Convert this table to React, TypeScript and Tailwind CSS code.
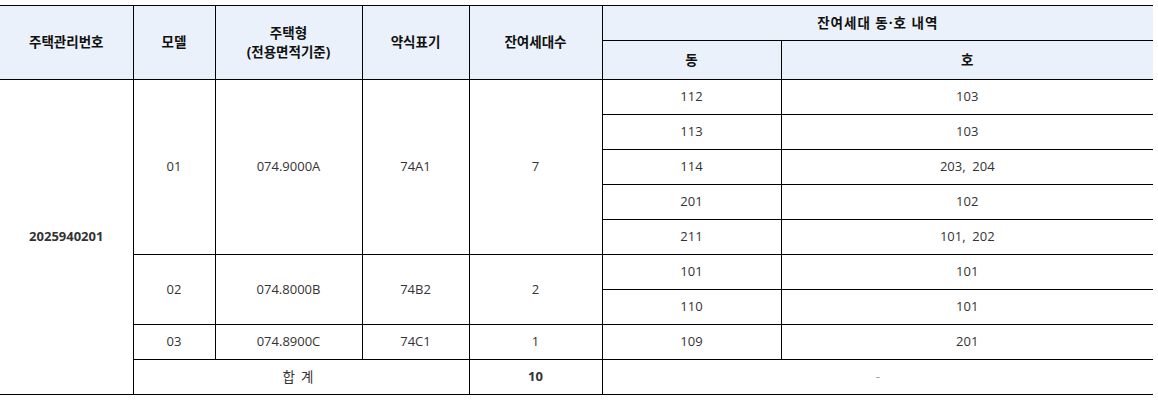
import React from 'react'

interface UnitRow {
  dong: string
  ho: string
}

interface ModelGroup {
  model: string
  houseType: string
  short: string
  count: string
  units: UnitRow[]
}

const groups: ModelGroup[] = [
  {
    model: '01',
    houseType: '074.9000A',
    short: '74A1',
    count: '7',
    units: [
      { dong: '112', ho: '103' },
      { dong: '113', ho: '103' },
      { dong: '114', ho: '203,  204' },
      { dong: '201', ho: '102' },
      { dong: '211', ho: '101,  202' },
    ],
  },
  {
    model: '02',
    houseType: '074.8000B',
    short: '74B2',
    count: '2',
    units: [
      { dong: '101', ho: '101' },
      { dong: '110', ho: '101' },
    ],
  },
  {
    model: '03',
    houseType: '074.8900C',
    short: '74C1',
    count: '1',
    units: [{ dong: '109', ho: '201' }],
  },
]

const totalRows = groups.reduce((n, g) => n + g.units.length, 0)

const th =
  'border border-black bg-[#eaf1fa] font-bold text-[#111] text-[13.5px] text-center align-middle leading-[19px]'
const td = 'border border-black text-center align-middle text-[#333]'

export default function App() {
  return (
    <div
      className="w-[1158px] h-[401px] bg-white pt-[5px] text-[13px]"
      style={{ fontFamily: '"Open Sans", "Noto Sans CJK KR", sans-serif' }}
    >
      <table className="w-[1153px] table-fixed border-collapse">
        <colgroup>
          <col className="w-[133px]" />
          <col className="w-[82px]" />
          <col className="w-[147px]" />
          <col className="w-[107px]" />
          <col className="w-[133px]" />
          <col className="w-[179px]" />
          <col className="w-[372px]" />
        </colgroup>
        <thead>
          <tr className="h-[35px]">
            <th rowSpan={2} className={`${th} border-l-0`}>
              주택관리번호
            </th>
            <th rowSpan={2} className={th}>
              모델
            </th>
            <th rowSpan={2} className={th}>
              주택형
              <br />
              (전용면적기준)
            </th>
            <th rowSpan={2} className={th}>
              약식표기
            </th>
            <th rowSpan={2} className={th}>
              잔여세대수
            </th>
            <th colSpan={2} className={`${th} border-r-0 tracking-[1px]`}>
              잔여세대 동·호 내역
            </th>
          </tr>
          <tr className="h-[39px]">
            <th className={th}>동</th>
            <th className={`${th} border-r-0`}>호</th>
          </tr>
        </thead>
        <tbody>
          {groups.map((g, gi) =>
            g.units.map((u, ui) => (
              <tr key={`${g.model}-${u.dong}`} className="h-[35px]">
                {gi === 0 && ui === 0 && (
                  <td rowSpan={totalRows + 1} className={`${td} border-l-0 font-bold text-[#111]`}>
                    2025940201
                  </td>
                )}
                {ui === 0 && (
                  <>
                    <td rowSpan={g.units.length} className={td}>
                      {g.model}
                    </td>
                    <td rowSpan={g.units.length} className={td}>
                      {g.houseType}
                    </td>
                    <td rowSpan={g.units.length} className={td}>
                      {g.short}
                    </td>
                    <td rowSpan={g.units.length} className={td}>
                      {g.count}
                    </td>
                  </>
                )}
                <td className={td}>{u.dong}</td>
                <td className={`${td} border-r-0 whitespace-pre`}>{u.ho}</td>
              </tr>
            )),
          )}
          <tr className="h-[35px]">
            <td colSpan={3} className={`${td} text-[13.5px] tracking-[6px]`}>
              합계
            </td>
            <td className={`${td} font-bold text-[#111]`}>10</td>
            <td colSpan={2} className={`${td} border-r-0 text-[#999]`}>
              -
            </td>
          </tr>
        </tbody>
      </table>
    </div>
  )
}
